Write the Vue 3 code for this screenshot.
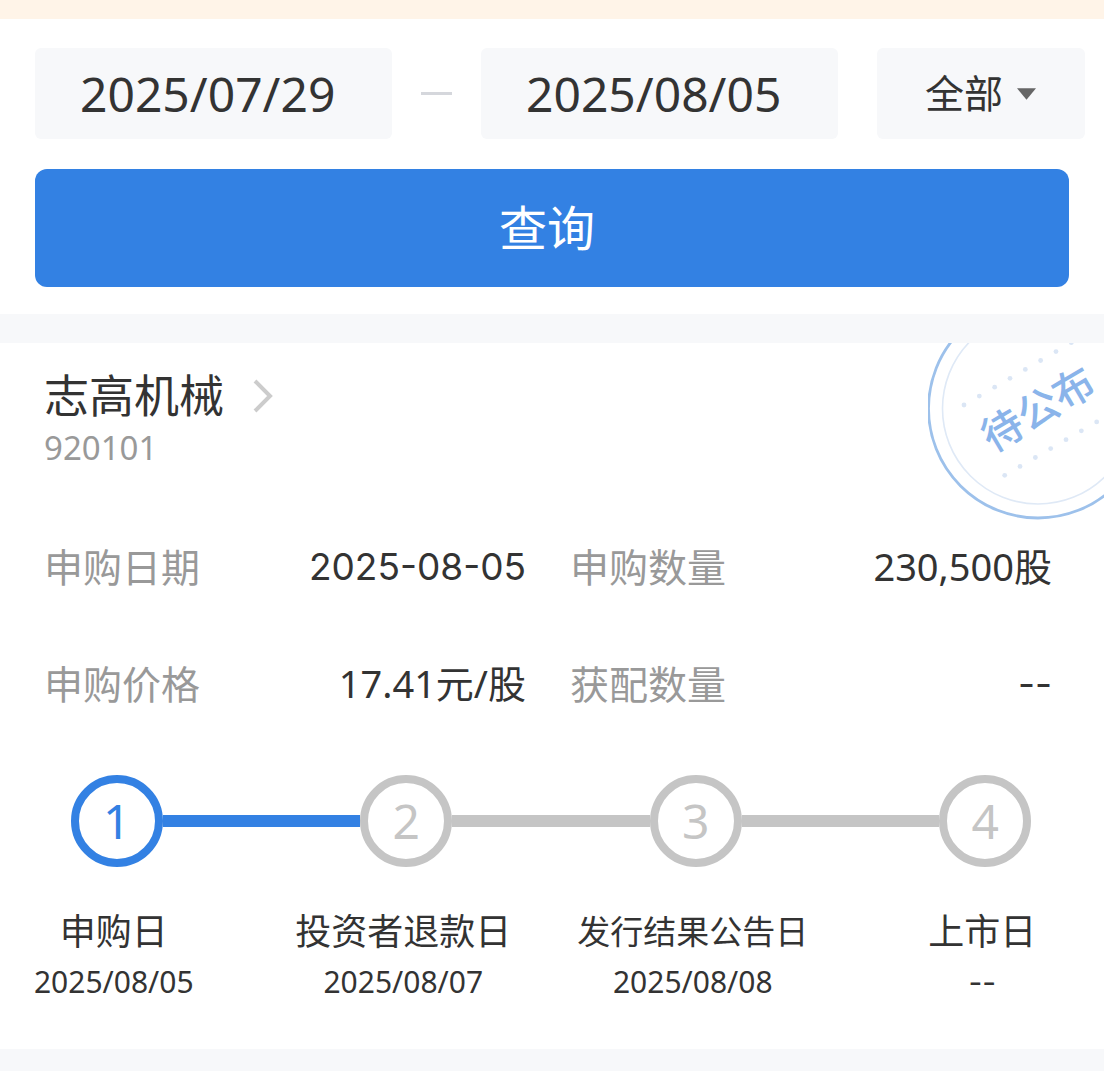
<script setup>
import { ref } from 'vue'

const startDate = ref('2025/07/29')
const endDate = ref('2025/08/05')
const scope = ref('全部')

const facts = [
  { label: '申购日期', value: '2025-08-05', dashed: true },
  { label: '申购数量', value: '230,500股' },
  { label: '申购价格', value: '17.41元/股' },
  { label: '获配数量', value: '--', dashed: true },
]

const steps = [
  { title: '申购日', date: '2025/08/05', active: true },
  { title: '投资者退款日', date: '2025/08/07', reached: true },
  { title: '发行结果公告日', date: '2025/08/08', compact: true },
  { title: '上市日', date: '--', dashed: true },
]

// Dots above and below the stamp's wording, laid along its slant
const dotRow = (x, y, count) =>
  Array.from({ length: count }, (_, i) => ({ x: x + i * 15.33, y: y - i * 8.9 }))
const dots = [...dotRow(36, 62, 8), ...dotRow(76.7, 132.3, 7)]
</script>

<template>
  <main class="page">
    <div class="notice"></div>

    <form class="filter" @submit.prevent>
      <div class="fields">
        <input v-model="startDate" class="date" type="text" aria-label="开始日期" />
        <span class="dash"></span>
        <input v-model="endDate" class="date" type="text" aria-label="结束日期" />
        <div class="scope">
          <select v-model="scope" aria-label="范围">
            <option>全部</option>
          </select>
          <svg class="caret" viewBox="0 0 20 12" aria-hidden="true"><path d="M0 0h20L10 12z" fill="#666" /></svg>
        </div>
      </div>
      <button class="query" type="submit">查询</button>
    </form>

    <article class="card">
      <svg class="stamp" viewBox="0 0 176 178" aria-label="待公布">
        <circle cx="110" cy="65.5" r="109.5" fill="none" stroke="#9dc1eb" stroke-width="2.8" />
        <circle cx="110" cy="65.5" r="95.5" fill="none" stroke="#dfe9f6" stroke-width="1.6" />
        <circle v-for="(d, i) in dots" :key="i" :cx="d.x" :cy="d.y" r="2.4" fill="#dbe6f5" />
        <text x="110" y="81" transform="rotate(-30.5 110 66)" text-anchor="middle">待公布</text>
      </svg>

      <header>
        <h1>
          <a href="#">
            志高机械
            <svg class="chevron" viewBox="0 0 20 34" aria-hidden="true">
              <path d="M2 2l15 15L2 32" fill="none" stroke="#ccc" stroke-width="4" />
            </svg>
          </a>
        </h1>
        <p class="code">920101</p>
      </header>

      <dl class="facts">
        <div v-for="f in facts" :key="f.label" class="fact">
          <dt>{{ f.label }}</dt>
          <dd :class="{ dashed: f.dashed }">{{ f.value }}</dd>
        </div>
      </dl>

      <ol class="steps">
        <li v-for="(s, i) in steps" :key="s.title" class="step" :class="{ active: s.active, reached: s.reached }">
          <div class="track">
            <span class="line before"></span>
            <span class="marker">{{ i + 1 }}</span>
            <span class="line after"></span>
          </div>
          <p class="title" :class="{ compact: s.compact }">{{ s.title }}</p>
          <p class="when" :class="{ dashed: s.dashed }">{{ s.date }}</p>
        </li>
      </ol>
    </article>

    <div class="divider"></div>
  </main>
</template>

<style>
body {
  margin: 0;
  background: #fff;
}
</style>

<style scoped>
.page {
  font-family: "Noto Sans", "Noto Sans CJK SC", sans-serif;
  color: #333;
  overflow: hidden;
}

.page * {
  box-sizing: border-box;
}

h1, p, dl, dd, ol {
  margin: 0;
  padding: 0;
  font-weight: 400;
}

input, select, button {
  border: 0;
  margin: 0;
  font-family: inherit;
  color: inherit;
}

.notice {
  height: 19px;
  background: #fff4e8;
}

.filter {
  padding: 29px 35px 27px;
  border-bottom: 29px solid #f7f8fa;
}

.fields {
  display: flex;
  align-items: center;
  margin-right: -16px;
}

.date {
  flex: 1;
  min-width: 0;
  height: 91px;
  padding: 0 0 0 45px;
  border-radius: 6px;
  background: #f7f8fa;
  font-size: 48px;
}

.dash {
  width: 31px;
  height: 3px;
  margin: 0 29px;
  background: #d5d7dc;
}

.scope {
  position: relative;
  width: 208px;
  margin-left: 39px;
}

.scope select {
  display: block;
  width: 100%;
  height: 91px;
  padding: 0 0 2px 48px;
  border-radius: 6px;
  background: #f7f8fa;
  font-size: 39px;
  appearance: none;
}

.caret {
  position: absolute;
  top: 40px;
  right: 49px;
  width: 19px;
  height: 12px;
  pointer-events: none;
}

.query {
  display: block;
  width: 100%;
  height: 118px;
  margin-top: 30px;
  padding: 0 10px 6px 0;
  border-radius: 12px;
  background: #3381e3;
  color: #fff;
  font-size: 48px;
}

.card {
  position: relative;
  padding: 23px 52px 47px 44px;
}

.stamp {
  position: absolute;
  top: 0;
  right: 0;
  width: 176px;
  height: 178px;
}

.stamp text {
  font-size: 41px;
  font-weight: 500;
  font-family: "Noto Sans CJK SC", sans-serif;
  fill: #8ab4ea;
}

h1 {
  font-size: 45px;
  line-height: 60px;
}

h1 a {
  display: inline-flex;
  align-items: center;
  gap: 29px;
  color: inherit;
  text-decoration: none;
}

.chevron {
  width: 20px;
  height: 34px;
}

.code {
  margin-top: 2px;
  font-size: 33px;
  line-height: 40px;
  color: #999;
}

.facts {
  display: grid;
  grid-template-columns: 1fr 1fr;
  gap: 60px 44px;
  margin-top: 70px;
}

.fact {
  display: flex;
  justify-content: space-between;
  line-height: 57px;
}

dt {
  font-size: 39px;
  color: #999;
}

dd {
  font-size: 38px;
}

dd.dashed {
  font-family: Inter, sans-serif;
  font-size: 37px;
}

.steps {
  display: grid;
  grid-template-columns: repeat(4, 1fr);
  margin: 63px -78px 0 -72px;
  list-style: none;
  text-align: center;
}

.track {
  display: flex;
  align-items: center;
  margin-bottom: 40px;
}

.line {
  flex: 1;
  height: 12px;
  background: #c5c5c5;
}

.marker {
  width: 92px;
  height: 92px;
  border: 8px solid #c5c5c5;
  border-radius: 50%;
  font-size: 48px;
  line-height: 76px;
  color: #c5c5c5;
}

.active .marker {
  border-color: #3381e3;
  color: #3381e3;
}

.active .after,
.reached .before {
  background: #3381e3;
}

.step:first-child .before,
.step:last-child .after {
  visibility: hidden;
}

.title {
  padding-right: 6px;
  font-size: 36px;
  line-height: 50px;
  white-space: nowrap;
}

.title.compact {
  font-size: 33px;
}

.when {
  margin-top: 5px;
  padding-right: 6px;
  font-size: 30px;
  line-height: 40px;
}

.when.dashed {
  font-family: Inter, sans-serif;
}

.divider {
  height: 22px;
  background: #f7f8fa;
}
</style>
